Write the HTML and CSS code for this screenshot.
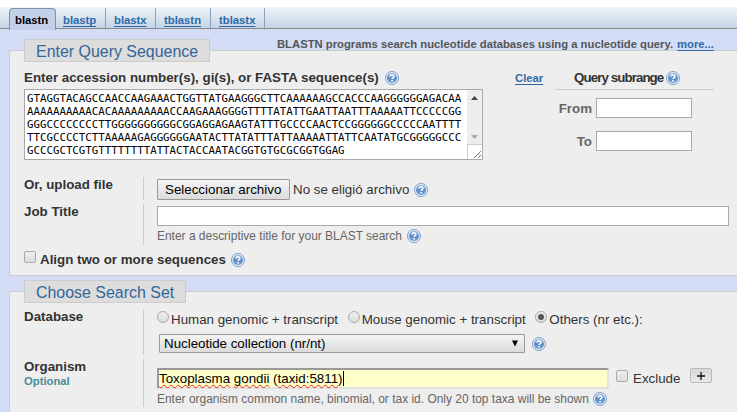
FILE: index.html
```html
<!DOCTYPE html>
<html lang="en">
<head>
<meta charset="utf-8">
<title>Nucleotide BLAST</title>
<link rel="stylesheet" href="styles.css">
</head>
<body>
<svg class="defs" width="0" height="0">
  <defs>
    <linearGradient id="ball" x1="0" y1="0" x2="0" y2="1">
      <stop offset="0" stop-color="#8fb0da"/><stop offset=".5" stop-color="#5f8dc6"/><stop offset="1" stop-color="#6f9fd6"/>
    </linearGradient>
    <symbol id="help" viewBox="0 0 14 14">
      <circle cx="7" cy="7" r="6.5" fill="#e4edf8" stroke="#7b9fcd" stroke-width="1"/>
      <circle cx="7" cy="7" r="5" fill="url(#ball)"/>
      <path d="M5.1 5.5C5.1 3.2 8.9 3.2 8.9 5.4C8.9 6.7 7.1 6.7 7.1 8.1" fill="none" stroke="#fff" stroke-width="1.5"/>
      <rect x="6.3" y="9" width="1.6" height="1.6" fill="#fff"/>
    </symbol>
  </defs>
</svg>
<nav class="tabs">
  <a class="tab active">blastn</a>
  <a class="tab t-p"><u>blastp</u></a>
  <a class="tab t-x"><u>blastx</u></a>
  <a class="tab t-tn"><u>tblastn</u></a>
  <a class="tab t-tx"><u>tblastx</u></a>
</nav>
<p class="intro"><span>BLASTN programs search nucleotide databases using a nucleotide query.</span> <a>more...</a></p>

<section class="panel query">
  <h2 class="legend l-query"><span>Enter Query Sequence</span></h2>
  <div class="query-grid">
    <div class="seq-col">
      <div class="seq-head"><b class="acc">Enter accession number(s), gi(s), or FASTA sequence(s)</b><svg class="help"><use href="#help"/></svg></div>
      <div class="textarea">
        <pre>GTAGGTACAGCCAACCAAGAAACTGGTTATGAAGGGCTTCAAAAAAGCCACCCAAGGGGGGAGACAA
AAAAAAAAAACACAAAAAAAAACCAAGAAAGGGGTTTTATATTGAATTAATTTAAAAATTCCCCCGG
GGGCCCCCCCCTTGGGGGGGGGGCGGAGGAGAAGTATTTGCCCCAACTCCGGGGGGCCCCCAATTTT
TTCGCCCCTCTTAAAAAGAGGGGGGAATACTTATATTTATTAAAAATTATTCAATATGCGGGGGCCC
GCCCGCTCGTGTTTTTTTTATTACTACCAATACGGTGTGCGCGGTGGAG</pre>
        <svg class="scroll" viewBox="0 0 15 69"><path fill="#ededed" d="M0 0h15v54H0z"/><path fill="#ccc" d="M0 54h15v1H0zM0 54h1v15H0z"/><path fill="#444" d="M7.5 6l3.5 4H4z"/><path fill="#aaa" d="M7.5 49L4 45h7z"/><path d="M7 68l7-7M11 68l3-3" stroke="#777" fill="none"/></svg>
      </div>
    </div>
    <a class="clear">Clear</a>
    <div class="range">
      <div class="range-head"><b>Query subrange</b><svg class="help"><use href="#help"/></svg></div>
      <label class="range-row"><b>From</b><i class="field"></i></label>
      <label class="range-row"><b>To</b><i class="field"></i></label>
    </div>
  </div>
  <div class="row upload">
    <b class="label">Or, upload file</b>
    <div class="value"><div class="line"><span class="button"><span>Seleccionar archivo</span></span><span class="nofile">No se eligió archivo</span><svg class="help"><use href="#help"/></svg></div></div>
  </div>
  <div class="row job">
    <b class="label">Job Title</b>
    <div class="value"><i class="field title-field"></i><div class="hint"><span class="job-hint">Enter a descriptive title for your BLAST search</span><svg class="help"><use href="#help"/></svg></div></div>
  </div>
  <div class="align"><i class="check"></i><b>Align two or more sequences</b><svg class="help"><use href="#help"/></svg></div>
</section>

<section class="panel search">
  <h2 class="legend l-search"><span>Choose Search Set</span></h2>
  <div class="row database">
    <b class="label">Database</b>
    <div class="value">
      <div class="radios"><i class="radio"></i><span class="human">Human genomic + transcript</span><i class="radio"></i><span class="mouse">Mouse genomic + transcript</span><i class="radio on"></i><span class="others">Others (nr etc.):</span></div>
      <div class="line"><span class="select"><span>Nucleotide collection (nr/nt)</span><svg width="6" height="7"><path d="M0 .5h6L3 6.5z"/></svg></span><svg class="help"><use href="#help"/></svg></div>
    </div>
  </div>
  <div class="row organism">
    <div class="label"><b>Organism</b><b class="optional">Optional</b></div>
    <div class="value">
      <div class="line org-line"><div class="org-field"><span class="typed"><span class="sp">Toxoplasma</span> <span class="sp">gondii</span> (<span class="sp">taxid:5811</span>)</span><i class="caret"></i></div><i class="check"></i><span class="exclude">Exclude</span><span class="plus"><svg width="8" height="8"><path d="M0 4h8M4 0v8" stroke="#111" stroke-width="1.3"/></svg></span></div>
      <div class="hint"><span class="org-hint">Enter organism common name, binomial, or tax id. Only 20 top taxa will be shown</span><svg class="help"><use href="#help"/></svg></div>
    </div>
  </div>
</section>
</body>
</html>
```
FILE: styles.css
```css
* { box-sizing: border-box; }
body {
  margin: 0;
  padding-top: 7px;
  height: 412px;
  overflow: hidden;
  background: linear-gradient(#fff 7px, #d3def6 7px);
  color: #333;
  font: 13.33px/15px "Liberation Sans", Arial, sans-serif;
}
.defs { display: block; height: 0; }
i { font-style: normal; flex: none; }
span, b { white-space: nowrap; }
.help { width: 14px; height: 14px; flex: none; display: block; }

.tabs {
  display: flex;
  height: 22px;
  padding-left: 9px;
  background: linear-gradient(#f0f5fa, #c4d4e5);
  border-bottom: 1px solid #888;
}
.tab {
  height: 22px;
  margin-top: 1px;
  padding: 5px 0 0 8px;
  border-right: 1px solid #8ba3bb;
  color: #2f6aa8;
  font-size: 11.3px;
  font-weight: bold;
  line-height: 14px;
}
.tab u { text-decoration-thickness: 1px; text-underline-offset: 2px; text-decoration-skip-ink: none; }
.tab.active {
  width: 47px;
  padding-left: 5px;
  background: #c3d1e8;
  border: 1px solid #7893ad;
  border-bottom: 0;
  border-radius: 4px 4px 0 0;
  color: #000;
  line-height: 13px;
}
.t-p { width: 50px; padding-left: 7px; }
.t-x { width: 50px; }
.t-tn { width: 55px; }
.t-tx { width: 54px; }

.intro {
  display: flex;
  justify-content: flex-end;
  gap: 4px;
  height: 21px;
  margin: 0;
  padding: 8px 23px 0 0;
  color: #555;
  font-size: 11.28px;
  font-weight: bold;
  line-height: 14px;
}
.intro a, .clear { color: #2f6aa8; text-decoration: underline 1px; text-underline-offset: 2px; }

.panel {
  margin-left: 9px;
  padding-left: 14px;
  background: #eee;
  border: 1px solid #ccc;
  border-right: 0;
}
.query { height: 226px; }
.search { height: 140px; margin-top: 15px; }
.legend {
  height: 23px;
  margin: -12px 0 0;
  padding-left: 11px;
  background: #ddd;
  border: 1px solid #ccc;
  color: #336699;
  font-size: 15.95px;
  font-weight: normal;
  line-height: 23px;
}
.l-query { width: 186px; }
.l-search { width: 162px; }

.query-grid { display: flex; height: 98px; margin-top: 7px; }
.seq-col { width: 459px; }
.seq-head { display: flex; align-items: center; gap: 6px; height: 18px; margin-bottom: 2px; }
.seq-head b { line-height: 17px; margin-top: -1px; }
.textarea {
  display: flex;
  justify-content: space-between;
  height: 71px;
  background: #fff;
  border: 1px solid #a9a9a9;
}
.textarea pre {
  margin: 2px 0 0 2px;
  color: #000;
  font: 10.77px/13px "DejaVu Sans Mono", monospace;
}
.scroll { width: 15px; height: 69px; }
.clear { width: 27px; margin: 2px 13px 0 32px; font-size: 11.28px; font-weight: bold; }
.range { width: 159px; }
.range-head {
  display: flex;
  align-items: center;
  gap: 3px;
  height: 21px;
  padding: 0 0 3px 19px;
  border-bottom: 1px solid #ccc;
}
.range-head b { letter-spacing: -.92px; }
.range-row { display: flex; align-items: center; height: 20px; margin-top: 8px; color: #666; }
.range-row + .range-row { margin-top: 13px; }
.range-row b { width: 37px; margin-right: 4px; text-align: right; }
.field { display: block; width: 96px; height: 20px; background: #fff; border: 1px solid #a9a9a9; }

.row { display: flex; }
.label { width: 119px; flex: none; }
.value { flex: 1; padding-left: 13px; border-left: 1px solid #ccc; }
.line { display: flex; align-items: center; }
.upload { height: 23px; margin-top: 10px; }
.upload .line { padding-top: 2px; }
.button {
  width: 133px;
  height: 21px;
  padding-left: 7px;
  border: 1px solid #999;
  border-radius: 1px;
  background: linear-gradient(#f4f4f4, #dcdcdc);
  color: #000;
  line-height: 19px;
}
.nofile { margin: 0 5px 0 3px; }
.job { height: 41px; margin-top: 4px; }
.job .value { padding-top: 2px; }
.title-field { width: 572px; }
.hint { display: flex; align-items: center; gap: 5px; height: 20px; color: #666; font-size: 11.96px; }
.organism .hint { gap: 4px; }
.align { display: flex; margin-top: 6px; height: 18px; }
.align b { margin: 1px 5px 0 4px; }
.align .help { margin-top: 2px; }
.check {
  width: 12px;
  height: 12px;
  border: 1px solid #aaa;
  border-radius: 2px;
  background: linear-gradient(#eee, #ddd);
}

.database { height: 46px; margin-top: 6px; }
.radios { display: flex; height: 25px; padding-top: 2px; }
.radios span { padding-top: 1px; }
.radio {
  display: grid;
  place-items: center;
  width: 12px;
  height: 12px;
  margin-right: 2px;
  border: 1px solid #aaa;
  border-radius: 50%;
  background: linear-gradient(#eee, #ddd);
}
.radio.on::after { content: ""; width: 6px; height: 6px; border-radius: 50%; background: #555; }
.human, .mouse { margin-right: 9.6px; }
.select {
  display: flex;
  align-items: center;
  justify-content: space-between;
  width: 366px;
  height: 19px;
  margin: 0 7px 0 2px;
  padding: 0 6px 0 4px;
  background: linear-gradient(#f4f4f4, #dcdcdc);
  border: 1px solid #999;
  border-radius: 1px;
  color: #000;
}
.organism { height: 48px; margin-top: 4px; }
.label b { display: block; }
.label .optional { color: #4c8c9b; font-size: 11.28px; line-height: 14px; }
.organism .value { padding-top: 9px; }
.org-line { align-items: flex-start; height: 21px; }
.org-field {
  display: flex;
  align-items: center;
  width: 452px;
  height: 21px;
  padding-left: 0;
  background: #ffffc8;
  border: 2px solid #e2e2e2;
  border-top-color: #999;
  border-left-color: #999;
  color: #000;
}
.sp { text-decoration: underline wavy #e02020 1px; text-underline-offset: 1px; text-decoration-skip-ink: none; }
.caret { width: 1px; height: 15px; background: #000; }
.org-line .check { margin: 2px 5px 0 7px; }
.exclude { width: 57px; padding-top: 3px; }
.plus {
  display: grid;
  place-items: center;
  width: 22px;
  height: 15px;
  border: 1px solid #bbb;
  border-radius: 2px;
  background: linear-gradient(#d8d8d8, #e8e8e8);
}
```
